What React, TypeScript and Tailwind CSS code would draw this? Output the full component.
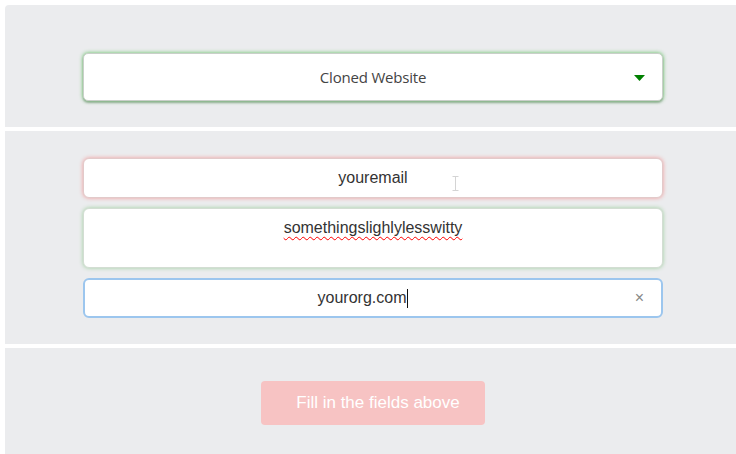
const App = () => {
  return (
    <div className="w-full h-[454px] bg-white overflow-hidden">
      <div className="w-[736px] ml-[5px] pt-[5px] flex flex-col gap-[4px]">
        <section className="bg-[#ebecee] rounded-tl-[4px] pt-[48px] pb-[26px] flex justify-center">
          <div className="relative w-[580px] h-[48px] bg-white rounded-[5px] border border-[#c9cfc9] shadow-[0_0_4px_#5fbf5f,0_2px_2px_rgba(0,0,0,0.25)] flex items-center justify-center">
            <span className="text-[15px] text-[#444] font-['Open_Sans',sans-serif] tracking-[-0.2px]">Cloned Website</span>
            <svg className="absolute right-[17px] top-[21px]" width="11" height="6" viewBox="0 0 11 6">
              <path d="M0 0H11L5.5 6Z" fill="#008000" />
            </svg>
          </div>
        </section>

        <section className="bg-[#ebecee] pt-[27px] pb-[26px] flex flex-col items-center gap-[10px] font-['Liberation_Sans',Arial,sans-serif] text-[16px] text-[#333]">
          <div className="relative w-[580px] h-[40px] bg-white rounded-[6px] border border-[#e2caca] shadow-[0_0_4px_#f19a9a] flex items-center justify-center">
            <span>youremail</span>
            <svg className="absolute left-[368px] top-[17px]" width="7" height="15" viewBox="0 0 7 15">
              <path d="M0.5 0.5H6.5M3.5 0.5V14.5M0.5 14.5H6.5" stroke="#d4d4d4" strokeWidth="1" fill="none" />
            </svg>
          </div>
          <div className="w-[580px] h-[60px] bg-white rounded-[6px] border border-[#d3ddd3] shadow-[0_0_4px_#9fcf9f] flex justify-center pt-[9px]">
            <span className="underline decoration-wavy decoration-[#f00] decoration-1 underline-offset-[3px] leading-[20px] h-[24px]">somethingslighlylesswitty</span>
          </div>
          <div className="relative w-[580px] h-[40px] bg-white rounded-[6px] border-2 border-[#9cc6ee] flex items-center justify-center pr-[20px]">
            <span>yourorg.com</span>
            <span className="w-px h-[19px] bg-[#111] ml-px" />
            <span className="absolute right-[17px] top-[8px] text-[16px] text-[#888] leading-[20px]">×</span>
          </div>
        </section>

        <section className="bg-[#ebecee] h-[106px] pt-[33px] flex justify-center">
          <button className="w-[224px] h-[44px] rounded-[4px] bg-[#f7c3c3] text-white text-[17px] pl-[10px] font-['Liberation_Sans',Arial,sans-serif]">
            Fill in the fields above
          </button>
        </section>
      </div>
    </div>
  );
};

export default App;
